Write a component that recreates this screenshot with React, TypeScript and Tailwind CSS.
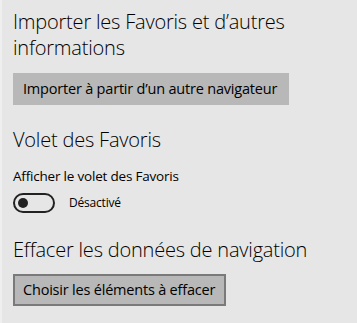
import { useState } from "react";

export default function App() {
  const [showBar, setShowBar] = useState(false);

  return (
    <div className="h-[323px] w-[357px] overflow-hidden border-l-2 border-[#efefef] bg-[#e6e6e6] pl-[11px] pt-[9px] font-['Open_Sans',sans-serif] text-black">
      <h2 className="w-[320px] text-[20px] font-light leading-[26px] tracking-[-0.2px]">
        Importer les Favoris et d’autres informations
      </h2>
      <button
        type="button"
        className="mt-[12px] flex h-[32px] w-[276px] items-center bg-[#b8b8b8] pl-[10px] text-[14.5px] leading-none tracking-[-0.2px]"
      >
        Importer à partir d’un autre navigateur
      </button>

      <h2 className="mt-[22px] text-[20px] font-light leading-[26px] tracking-[-0.2px]">
        Volet des Favoris
      </h2>
      <p className="mt-[14px] text-[13.5px] leading-[18px] tracking-[-0.2px]">
        Afficher le volet des Favoris
      </p>
      <div className="mt-[8px] flex h-[20px] items-center gap-[14px]">
        <button
          type="button"
          onClick={() => setShowBar(!showBar)}
          className={`flex h-[20px] w-[42px] items-center rounded-full border-2 border-[#222] px-[3px] ${showBar ? "justify-end" : "justify-start"}`}
        >
          <span className="h-[10px] w-[10px] rounded-full bg-[#222]" />
        </button>
        <span className="text-[12px] leading-none tracking-[-0.2px]">{showBar ? "Activé" : "Désactivé"}</span>
      </div>

      <h2 className="mt-[24px] text-[20px] font-light leading-[26px] tracking-[-0.2px]">
        Effacer les données de navigation
      </h2>
      <button
        type="button"
        className="mt-[11px] flex h-[32px] w-[213px] items-center border-2 border-[#7a7a7a] bg-[#b8b8b8] pl-[8px] text-[14.5px] leading-none tracking-[-0.2px]"
      >
        Choisir les éléments à effacer
      </button>
    </div>
  );
}
